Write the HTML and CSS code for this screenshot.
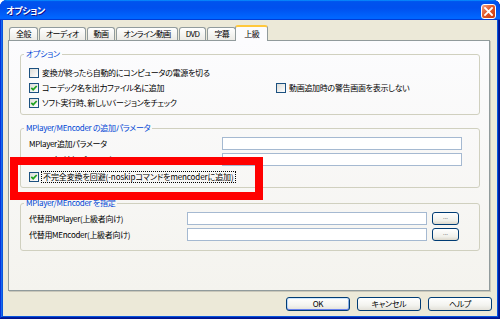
FILE: index.html
```html
<!DOCTYPE html>
<html lang="ja">
<head>
  <meta charset="UTF-8">
  <meta name="viewport" content="width=device-width, initial-scale=1.0">
  <title>オプション</title>

  <link rel="stylesheet" href="styles.css">
</head>
<body>
  <div class="window">
    <div class="titlebar">
      <span class="title">オプション</span>
      <span class="close">
        <svg width="9" height="9" viewBox="0 0 9 9"><path d="M1 1L8 8M8 1L1 8" stroke="#fff" stroke-width="1.8" stroke-linecap="square"/></svg>
      </span>
    </div>

    <div class="client">
      <div class="tabs">
        <span class="tab">全般</span>
        <span class="tab">オーディオ</span>
        <span class="tab">動画</span>
        <span class="tab">オンライン動画</span>
        <span class="tab">DVD</span>
        <span class="tab">字幕</span>
        <span class="tab active">上級</span>
      </div>

      <div class="panel">
        <fieldset class="group">
          <legend>オプション</legend>
          <div class="opt-grid">
            <label class="check col1"><span class="box"></span>変換が終ったら自動的にコンピュータの電源を切る</label>
            <label class="check col1"><span class="box"><svg width="8" height="8" viewBox="0 0 8 8"><path d="M1.3 3.8L3.2 5.7L6.7 2" fill="none" stroke="#21a121" stroke-width="1.7"/></svg></span>コーデック名を出力ファイル名に追加</label>
            <label class="check col2"><span class="box"></span>動画追加時の警告画面を表示しない</label>
            <label class="check col1"><span class="box"><svg width="8" height="8" viewBox="0 0 8 8"><path d="M1.3 3.8L3.2 5.7L6.7 2" fill="none" stroke="#21a121" stroke-width="1.7"/></svg></span>ソフト実行時、新しいバージョンをチェック</label>
          </div>
        </fieldset>

        <fieldset class="group group-params">
          <legend>MPlayer/MEncoder の追加パラメータ</legend>
          <div class="param-grid">
            <span>MPlayer追加パラメータ</span>
            <input class="field" type="text">
            <span>MEncoder追加パラメータ</span>
            <input class="field" type="text">
            <label class="check wide"><span class="box"><svg width="8" height="8" viewBox="0 0 8 8"><path d="M1.3 3.8L3.2 5.7L6.7 2" fill="none" stroke="#21a121" stroke-width="1.7"/></svg></span><span class="focus">不完全変換を回避(-noskipコマンドをmencoderに追加)</span></label>
          </div>
        </fieldset>

        <fieldset class="group group-paths">
          <legend>MPlayer/MEncoder を指定</legend>
          <div class="path-grid">
            <span>代替用MPlayer(上級者向け)</span>
            <input class="field" type="text">
            <span class="browse">...</span>
            <span>代替用MEncoder(上級者向け)</span>
            <input class="field" type="text">
            <span class="browse">...</span>
          </div>
        </fieldset>
      </div>

      <div class="buttons">
        <span class="btn default">OK</span>
        <span class="btn">キャンセル</span>
        <span class="btn">ヘルプ</span>
      </div>
    </div>

    <div class="highlight"></div>
  </div>
</body>
</html>
```

FILE: styles.css
```css
body {
  margin: 0;
  font-family: "Noto Sans CJK JP", "Noto Sans", sans-serif;
  font-size: 8px;
  line-height: 10px;
  letter-spacing: -0.3px;
  font-feature-settings: "palt";
  color: #000;
}
.window {
  position: relative;
  width: 500px;
  height: 319px;
  display: flex;
  flex-direction: column;
  background: #0855dd;
  border-radius: 7px 7px 0 0;
  overflow: hidden;
  box-shadow: inset -1px -1px #00138c, inset 1px 1px #0831d9, inset -2px -2px #001ea0, inset 2px 2px #166aee;
}
.titlebar {
  flex: none;
  height: 20px;
  display: flex;
  align-items: center;
  justify-content: space-between;
  padding: 0 4px 0 6px;
  background: linear-gradient(180deg, #0997ff, #0053ee 8%, #0050ee 40%, #0066ff 88%, #0066ff 93%, #005bff 95%, #003dd7 96%, #003dd7);
}
.title {
  color: #fff;
  font-weight: bold;
  font-size: 9px;
  letter-spacing: -0.4px;
  margin-top: 2px;
  text-shadow: 1px 1px #0f1089;
}
.close {
  width: 15px;
  height: 15px;
  margin-top: 2px;
  box-sizing: border-box;
  border: 1px solid #fff;
  border-radius: 3px;
  background: linear-gradient(135deg, #f3a58a, #e35a2b 45%, #c7390f);
  display: flex;
  align-items: center;
  justify-content: center;
}
.client {
  flex: 1;
  margin: 0 3px 3px;
  padding: 5px;
  background: #ece9d8;
  display: flex;
  flex-direction: column;
}
.tabs {
  display: flex;
  align-items: flex-end;
  height: 16px;
  margin-bottom: -1px;
  padding-left: 1px;
  position: relative;
  z-index: 1;
}
.tab {
  height: 13px;
  margin: 0 1px 1px 0;
  padding: 0 6px;
  box-sizing: border-box;
  border: 1px solid #919b9c;
  border-bottom: none;
  border-radius: 3px 3px 0 0;
  background: linear-gradient(#fff, #ecebe6);
  display: flex;
  align-items: center;
  letter-spacing: -0.6px;
  white-space: nowrap;
}
.tab.active {
  height: 16px;
  margin: 0 0 0 -2px;
  padding: 0 8px;
  border-top: 2px solid #ffc83c;
  background: #fcfcfe;
}
.panel {
  flex: 1;
  margin-right: 2px;
  padding: 8px 9px 0 11px;
  border: 1px solid #919b9c;
  background: linear-gradient(#fcfcfe, #f4f3ee);
  box-shadow: 1px 1px 0 #c9c7ba;
}
.group {
  margin: 0;
  padding: 6px 8px 4px;
  min-width: 0;
  border: 1px solid #d0d0bf;
  border-radius: 3px;
}
.group legend {
  margin-left: -5px;
  padding: 0 2px;
  color: #0046d5;
}
.group-params {
  margin-top: 8px;
  padding: 4px 8px 2px;
}
.group-paths {
  margin-top: 10px;
  padding: 4px 8px 9px;
}
.opt-grid {
  display: grid;
  grid-template-columns: 247px 1fr;
  grid-auto-rows: 15px;
}
.col1 {
  grid-column: 1;
}
.col2 {
  grid-column: 2;
}
.check {
  display: flex;
  align-items: center;
  gap: 3px;
  white-space: nowrap;
}
.box {
  width: 10px;
  height: 10px;
  flex: none;
  box-sizing: border-box;
  border: 1px solid #1c5180;
  background: linear-gradient(135deg, #dcdcd7, #fff);
  display: flex;
  align-items: center;
  justify-content: center;
}
.param-grid {
  display: grid;
  grid-template-columns: 193px 240px;
  grid-template-rows: 13px 13px 16px;
  row-gap: 3px;
  align-items: center;
}
.wide {
  grid-column: 1 / -1;
}
.focus {
  outline: 1px dotted #000;
  padding: 0 1px;
  letter-spacing: -0.1px;
}
.path-grid {
  display: grid;
  grid-template-columns: 153px 240px 27px;
  grid-template-rows: 13px 13px;
  column-gap: 5px;
  row-gap: 3px;
  align-items: center;
}
.field {
  width: 240px;
  height: 13px;
  margin: 0;
  padding: 0;
  box-sizing: border-box;
  border: 1px solid #a5b9d1;
  background: #fff;
}
.browse {
  height: 13px;
  box-sizing: border-box;
  border: 1px solid #003c74;
  border-radius: 3px;
  background: linear-gradient(#fff, #f0f0ea 70%, #dcd8cc);
  font-size: 6px;
  line-height: 8px;
  letter-spacing: 0;
  color: #555;
  text-align: center;
}
.buttons {
  display: flex;
  justify-content: flex-end;
  gap: 7px;
  margin-top: 6px;
}
.btn {
  width: 64px;
  height: 14px;
  box-sizing: border-box;
  border: 1px solid #003c74;
  border-radius: 3px;
  background: linear-gradient(#fff, #f3f3ef 60%, #e3e1d9);
  display: flex;
  align-items: center;
  justify-content: center;
}
.btn.default {
  box-shadow: inset 0 1px #cee7ff, inset 0 -1px #6982ee, inset 1px 0 #b8d6fb, inset -1px 0 #89ade4;
}
.highlight {
  position: absolute;
  left: 10px;
  top: 157px;
  width: 253px;
  height: 43px;
  box-sizing: border-box;
  border: 8px solid #f00;
}
```
